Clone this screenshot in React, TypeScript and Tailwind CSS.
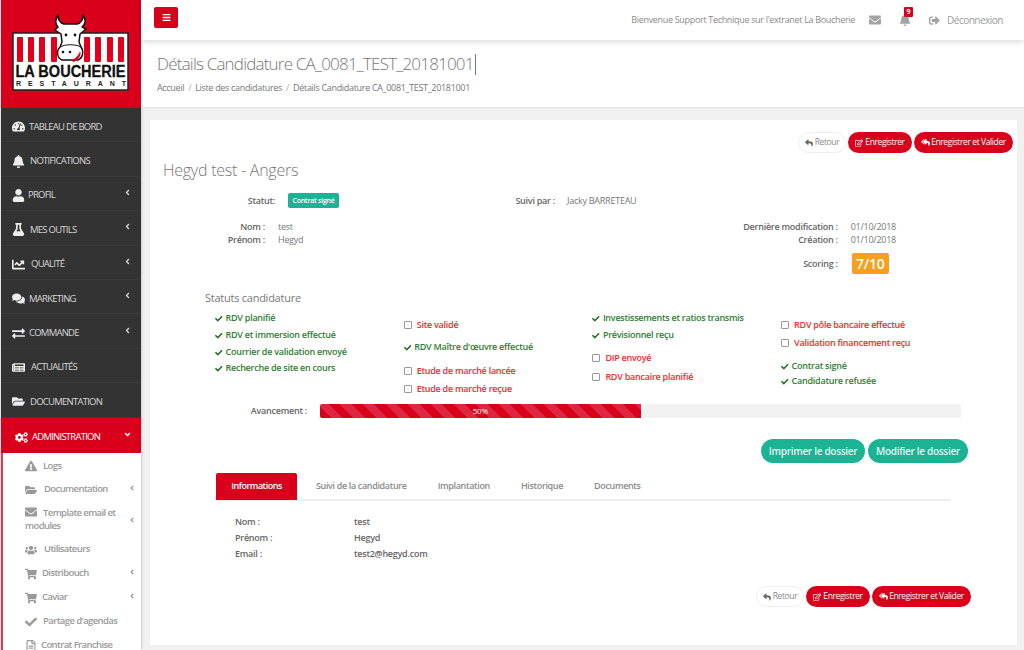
import React from 'react';
import {
  FaTachometerAlt, FaBell, FaUser, FaFlask, FaChartLine, FaComments, FaExchangeAlt, FaNewspaper,
  FaFolderOpen, FaCogs, FaExclamationTriangle, FaEnvelope, FaUsers, FaShoppingCart, FaCheck,
  FaRegFileAlt, FaBars, FaSignOutAlt, FaReply, FaRegEdit, FaReplyAll, FaAngleLeft, FaAngleDown,
} from 'react-icons/fa';

const MENU = [
  { label: 'TABLEAU DE BORD', icon: FaTachometerAlt, gap: 'gap-[4px]' },
  { label: 'NOTIFICATIONS', icon: FaBell, gap: 'gap-[5px]' },
  { label: 'PROFIL', icon: FaUser, gap: 'gap-[3px]', arrow: true },
  { label: 'MES OUTILS', icon: FaFlask, gap: 'gap-[5px]', arrow: true },
  { label: 'QUALITÉ', icon: FaChartLine, gap: 'gap-[6px]', arrow: true },
  { label: 'MARKETING', icon: FaComments, gap: 'gap-[4px]', arrow: true },
  { label: 'COMMANDE', icon: FaExchangeAlt, gap: 'gap-[4px]', arrow: true },
  { label: 'ACTUALITÉS', icon: FaNewspaper, gap: 'gap-[6px]' },
  { label: 'DOCUMENTATION', icon: FaFolderOpen, gap: 'gap-[5px]' },
];

const SUBMENU = [
  { label: 'Logs', icon: FaExclamationTriangle, h: 'h-[23px]', gap: 'gap-[6px]' },
  { label: 'Documentation', icon: FaFolderOpen, h: 'h-[24px]', gap: 'gap-[7px]', arrow: true },
  { label: 'Utilisateurs', icon: FaUsers, h: 'h-[24px]', gap: 'gap-[7px]' },
  { label: 'Distribouch', icon: FaShoppingCart, h: 'h-[24px]', gap: 'gap-[5px]', arrow: true },
  { label: 'Caviar', icon: FaShoppingCart, h: 'h-[24px]', gap: 'gap-[5px]', arrow: true },
  { label: "Partage d'agendas", icon: FaCheck, h: 'h-[24px]', gap: 'gap-[6px]' },
  { label: 'Contrat Franchise', icon: FaRegFileAlt, h: 'h-[24px]', gap: 'gap-[4px]' },
];

const STATUS_COLUMNS = [
  {
    pt: 'pt-[1px]',
    items: [
      { label: 'RDV planifié', done: true, h: 'h-[17px]' },
      { label: 'RDV et immersion effectué', done: true, h: 'h-[17px]' },
      { label: 'Courrier de validation envoyé', done: true, h: 'h-[16px]' },
      { label: 'Recherche de site en cours', done: true, h: 'h-[17px]' },
    ],
  },
  {
    pt: 'pt-[8px]',
    items: [
      { label: 'Site validé', done: false, h: 'h-[22px]' },
      { label: "RDV Maître d'œuvre effectué", done: true, h: 'h-[24px]' },
      { label: 'Etude de marché lancée', done: false, h: 'h-[18px]' },
      { label: 'Etude de marché reçue', done: false, h: 'h-[18px]' },
    ],
  },
  {
    pt: 'pt-[1px]',
    items: [
      { label: 'Investissements et ratios transmis', done: true, h: 'h-[17px]' },
      { label: 'Prévisionnel reçu', done: true, h: 'h-[23px]' },
      { label: 'DIP envoyé', done: false, h: 'h-[19px]' },
      { label: 'RDV bancaire planifié', done: false, h: 'h-[18px]' },
    ],
  },
  {
    pt: 'pt-[8px]',
    items: [
      { label: 'RDV pôle bancaire effectué', done: false, h: 'h-[18px]' },
      { label: 'Validation financement reçu', done: false, h: 'h-[23px]' },
      { label: 'Contrat signé', done: true, h: 'h-[15px]' },
      { label: 'Candidature refusée', done: true, h: 'h-[17px]' },
    ],
  },
];

const Logo = () => (
  <svg width="141" height="108" viewBox="0 0 141 108">
    <rect x="13" y="33" width="115" height="57" fill="#fff" stroke="#222" strokeWidth="1.5" />
    {[17, 28, 39, 51, 84, 95, 107, 118].map((x) => (
      <rect key={x} x={x} y="37" width="6" height="25" rx="1" fill="#e2001a" />
    ))}
    <path d="M58 27 C55 24 55 19 58 15 C58 20 60 23 64 24 L77 24 C81 23 83 20 83 15 C86 19 86 24 82 27 L86 29 L80 34 L79 42 L81 47 C84 51 83 58 78 60 L62 60 C57 58 56 51 60 47 L62 42 L61 34 L55 30 Z" fill="#fff" stroke="#111" strokeWidth="1.5" strokeLinejoin="round" />
    <path d="M60 47 C65 44 76 44 81 47" fill="none" stroke="#111" strokeWidth="1" />
    <circle cx="66" cy="35" r="1.4" fill="#111" />
    <circle cx="75" cy="35" r="1.4" fill="#111" />
    <circle cx="63" cy="52" r="1.3" fill="#111" />
    <circle cx="70" cy="52" r="1.3" fill="#111" />
    <path d="M72 60 C75 59 79 55 80 51 C82 55 78 61 73 62 Z" fill="#e2001a" />
    <text x="15.5" y="76.5" fontFamily="'Liberation Sans', sans-serif" fontWeight="700" fontSize="16" fill="#111" stroke="#111" strokeWidth="0.3" textLength="110" lengthAdjust="spacingAndGlyphs">LA BOUCHERIE</text>
    <text x="16" y="85.5" fontFamily="'Liberation Sans', sans-serif" fontWeight="700" fontSize="7" fill="#222" textLength="110" lengthAdjust="spacing">RESTAURANT</text>
  </svg>
);

const SubItem = ({ label, icon: Icon, h, gap, arrow }: { label: string; icon: React.ComponentType<{ className?: string }>; h: string; gap: string; arrow?: boolean }) => (
  <div className={`${h} flex items-center ${gap}`}>
    <Icon className="text-[12px] shrink-0" />
    <span className="text-[9.5px] font-semibold tracking-[-0.6px] flex-1 whitespace-nowrap">{label}</span>
    {arrow && <FaAngleLeft className="text-[8px] shrink-0 -mt-[3px]" />}
  </div>
);

const Sidebar = () => (
  <aside className="w-[141px] shrink-0 h-[650px] overflow-hidden bg-white border-l border-l-[#dfe6e8] shadow-[1px_0_2px_rgba(0,0,0,0.15)]">
    <div className="h-[108px] bg-[#d9001b] -ml-px">
      <Logo />
    </div>
    {MENU.map((m) => (
      <div key={m.label} className={`h-[34.4px] pt-[4px] bg-[#333333] border-b border-b-[#3a3a3a] flex items-center ${m.gap} pl-[11px] pr-[9px] text-[#d6d6d6]`}>
        <m.icon className="text-[13px] text-[#eeeeee] shrink-0" />
        <span className="text-[9.5px] tracking-[-0.75px] flex-1 whitespace-nowrap">{m.label}</span>
        {m.arrow && <FaAngleLeft className="text-[9px] -mt-[6px]" />}
      </div>
    ))}
    <div className="h-[35px] pt-[4px] bg-[#d9001b] flex items-center gap-[4px] pl-[14px] pr-[9px] text-white">
      <FaCogs className="text-[13px] shrink-0" />
      <span className="text-[9.5px] tracking-[-0.75px] flex-1">ADMINISTRATION</span>
      <FaAngleDown className="text-[9px] -mt-[6px]" />
    </div>
    <div className="border-l-2 border-l-[#e8394c] pl-[22px] pr-[5px] pt-[2px] text-[#9a9a9a]">
      {SUBMENU.slice(0, 2).map((s) => <SubItem key={s.label} {...s} />)}
      <div className="h-[38px] flex items-center -mt-[2px]">
        <div className="flex-1 text-[9.5px] leading-[13px] font-semibold tracking-[-0.6px]">
          <FaEnvelope className="inline text-[12px] mr-[6px] -mt-[2px]" />Template email et modules
        </div>
        <FaAngleLeft className="text-[8px] shrink-0 mt-[3px]" />
      </div>
      {SUBMENU.slice(2).map((s) => <SubItem key={s.label} {...s} />)}
    </div>
  </aside>
);

const ActionButtons = () => (
  <div className="flex items-center gap-[2px] text-[8.5px] tracking-[-0.4px]">
    <button className="h-[21px] w-[48px] rounded-full border border-[#eeeeee] bg-white text-[#8a8a8a] flex items-center justify-center gap-[2px]">
      <FaReply className="text-[8px] text-[#666666]" />Retour
    </button>
    <button className="h-[21px] w-[64px] rounded-full bg-[#d9001b] text-white flex items-center justify-center gap-[2px]">
      <FaRegEdit className="text-[8px]" />Enregistrer
    </button>
    <button className="h-[21px] w-[99px] rounded-full bg-[#d9001b] text-white flex items-center justify-center gap-[1px] whitespace-nowrap">
      <FaReplyAll className="text-[9px]" />Enregistrer et Valider
    </button>
  </div>
);

const StatusItem = ({ label, done, h }: { label: string; done: boolean; h: string }) => (
  <div className={`${h} flex items-start whitespace-nowrap text-[9px] leading-[12px] font-semibold ${done ? 'text-[#2f7d32] gap-[3px]' : 'text-[#f52a2a] gap-[4px]'}`}>
    {done ? (
      <FaCheck className="text-[7.5px] mt-[2.5px] text-[#1f6f24] shrink-0" />
    ) : (
      <span className="w-[8px] h-[8px] mt-[2px] mr-[1px] border border-[#999999] rounded-[1px] bg-white shrink-0" />
    )}
    {label}
  </div>
);

const Label = ({ w, children }: { w: string; children: React.ReactNode }) => (
  <span className={`${w} text-right font-semibold text-[#666666] whitespace-nowrap`}>{children}</span>
);

export default function App() {
  return (
    <div className="w-[1024px] h-[650px] overflow-hidden flex bg-[#f1f1f1] font-['Open_Sans',sans-serif]">
      <Sidebar />
      <main className="flex-1 min-w-0 flex flex-col">
        <header className="h-[40px] shrink-0 bg-white shadow-[0_2px_6px_rgba(0,0,0,0.15)] z-10 flex items-center pl-[13px] pr-[21px]">
          <button className="w-[24px] h-[21px] rounded-[2px] bg-[#d9001b] text-white flex items-center justify-center -mt-[6px]">
            <FaBars className="text-[9px]" />
          </button>
          <span className="ml-auto text-[9px] text-[#8a8a8a] tracking-[-0.32px] whitespace-nowrap">Bienvenue Support Technique sur l'extranet La Boucherie</span>
          <FaEnvelope className="ml-[14px] text-[12px] text-[#a3a3a3]" />
          <div className="relative ml-[18px]">
            <FaBell className="text-[12px] text-[#a3a3a3]" />
            <span className="absolute -top-[7px] left-[5px] w-[9px] h-[10px] bg-[#d9001b] rounded-[1px] text-white text-[7px] leading-[10px] font-bold text-center">9</span>
          </div>
          <FaSignOutAlt className="ml-[18px] text-[11px] text-[#a3a3a3]" />
          <span className="ml-[7px] text-[10px] tracking-[-0.5px] text-[#9a9a9a]">Déconnexion</span>
        </header>

        <section className="h-[68px] shrink-0 bg-white border-b border-b-[#e8e8e8] pl-[16px] pt-[11px]">
          <div className="flex items-center h-[26px]">
            <h1 className="text-[17px] font-light text-[#777777] tracking-[-0.8px] whitespace-nowrap">Détails Candidature CA_0081_TEST_20181001</h1>
            <span className="w-px h-[21px] bg-[#777777] ml-[1px]" />
          </div>
          <div className="mt-[4px] text-[9px] text-[#777777] tracking-[-0.32px] flex gap-[4px]">
            <span>Accueil</span><span className="text-[#aaaaaa]">/</span>
            <span>Liste des candidatures</span><span className="text-[#aaaaaa]">/</span>
            <span>Détails Candidature CA_0081_TEST_20181001</span>
          </div>
        </section>

        <section className="mt-[12px] ml-[9px] w-[867px] h-[525px] bg-white text-[9px] tracking-[-0.25px] text-[#777777]">
          <div className="pt-[12px] pr-[4px] flex justify-end"><ActionButtons /></div>
          <h2 className="mt-[5px] ml-[13px] text-[16px] font-light leading-[24px] text-[#777777]">Hegyd test - Angers</h2>

          <div className="mt-[11px] flex items-center h-[15px]">
            <Label w="w-[125px]">Statut:</Label>
            <span className="ml-[13px] w-[51px] h-[15px] rounded-[2px] bg-[#1cb394] text-white text-[7px] leading-[15px] text-center font-semibold whitespace-nowrap">Contrat signé</span>
            <Label w="w-[216px]">Suivi par :</Label>
            <span className="ml-[12px]">Jacky BARRETEAU</span>
          </div>

          <div className="mt-[12px] flex items-start leading-[13px]">
            <div className="flex flex-col">
              <Label w="w-[115px]">Nom :</Label>
              <Label w="w-[115px]">Prénom :</Label>
            </div>
            <div className="ml-[13px] flex flex-col">
              <span>test</span>
              <span>Hegyd</span>
            </div>
            <div className="ml-auto flex flex-col mr-[121px]">
              <div className="flex"><Label w="w-[120px]">Dernière modification :</Label><span className="ml-[13px]">01/10/2018</span></div>
              <div className="flex"><Label w="w-[120px]">Création :</Label><span className="ml-[13px]">01/10/2018</span></div>
              <div className="flex items-center mt-[7px]">
                <Label w="w-[120px]">Scoring :</Label>
                <span className="ml-[14px] w-[37px] h-[21px] rounded-[2px] bg-[#f5a01e] text-white text-[14px] leading-[21px] text-center font-semibold">7/10</span>
              </div>
            </div>
          </div>

          <h3 className="mt-[16px] ml-[55px] text-[11px] leading-[16px] text-[#777777]">Statuts candidature</h3>
          <div className="mt-[5px] ml-[65px] flex h-[88px]">
            {STATUS_COLUMNS.map((col) => (
              <div key={col.items[0].label} className={`w-[188.7px] shrink-0 ${col.pt}`}>
                {col.items.map((it) => <StatusItem key={it.label} {...it} />)}
              </div>
            ))}
          </div>

          <div className="mt-[5px] flex items-center h-[14px]">
            <Label w="w-[157px]">Avancement :</Label>
            <div className="ml-[13px] w-[641px] h-[14px] bg-[#f2f2f2] rounded-[2px] overflow-hidden">
              <div className="w-1/2 h-full text-white text-[8px] leading-[14px] text-center bg-[repeating-linear-gradient(45deg,#d9001b_0,#d9001b_8px,#de2640_8px,#de2640_16px)]">50%</div>
            </div>
          </div>

          <div className="mt-[21px] ml-[611px] flex gap-[3px] text-[10px] tracking-[-0.3px] font-semibold text-[#e4f4f0]">
            <button className="w-[104px] h-[24px] rounded-full bg-[#1cb394]">Imprimer le dossier</button>
            <button className="w-[100px] h-[24px] rounded-full bg-[#1cb394]">Modifier le dossier</button>
          </div>

          <div className="mt-[10px] ml-[66px] w-[735px] h-[28px] border-b-2 border-b-[#eeeeee] flex items-center text-[9px] tracking-[-0.35px] font-semibold text-[#8a8a8a]">
            <span className="w-[81px] h-[27px] rounded-t-[2px] bg-[#d9001b] text-white flex items-center justify-center tracking-[-0.5px]">Informations</span>
            <span className="ml-[19px]">Suivi de la candidature</span>
            <span className="ml-[31px]">Implantation</span>
            <span className="ml-[31px]">Historique</span>
            <span className="ml-[31px]">Documents</span>
          </div>

          <div className="mt-[13px] ml-[85px] font-semibold text-[#666666] leading-[16px] grid grid-cols-[119px_auto] justify-start">
            <span>Nom :</span><span>test</span>
            <span>Prénom :</span><span>Hegyd</span>
            <span>Email :</span><span>test2@hegyd.com</span>
          </div>

          <div className="mt-[24px] pr-[46px] flex justify-end"><ActionButtons /></div>
        </section>
      </main>
    </div>
  );
}
